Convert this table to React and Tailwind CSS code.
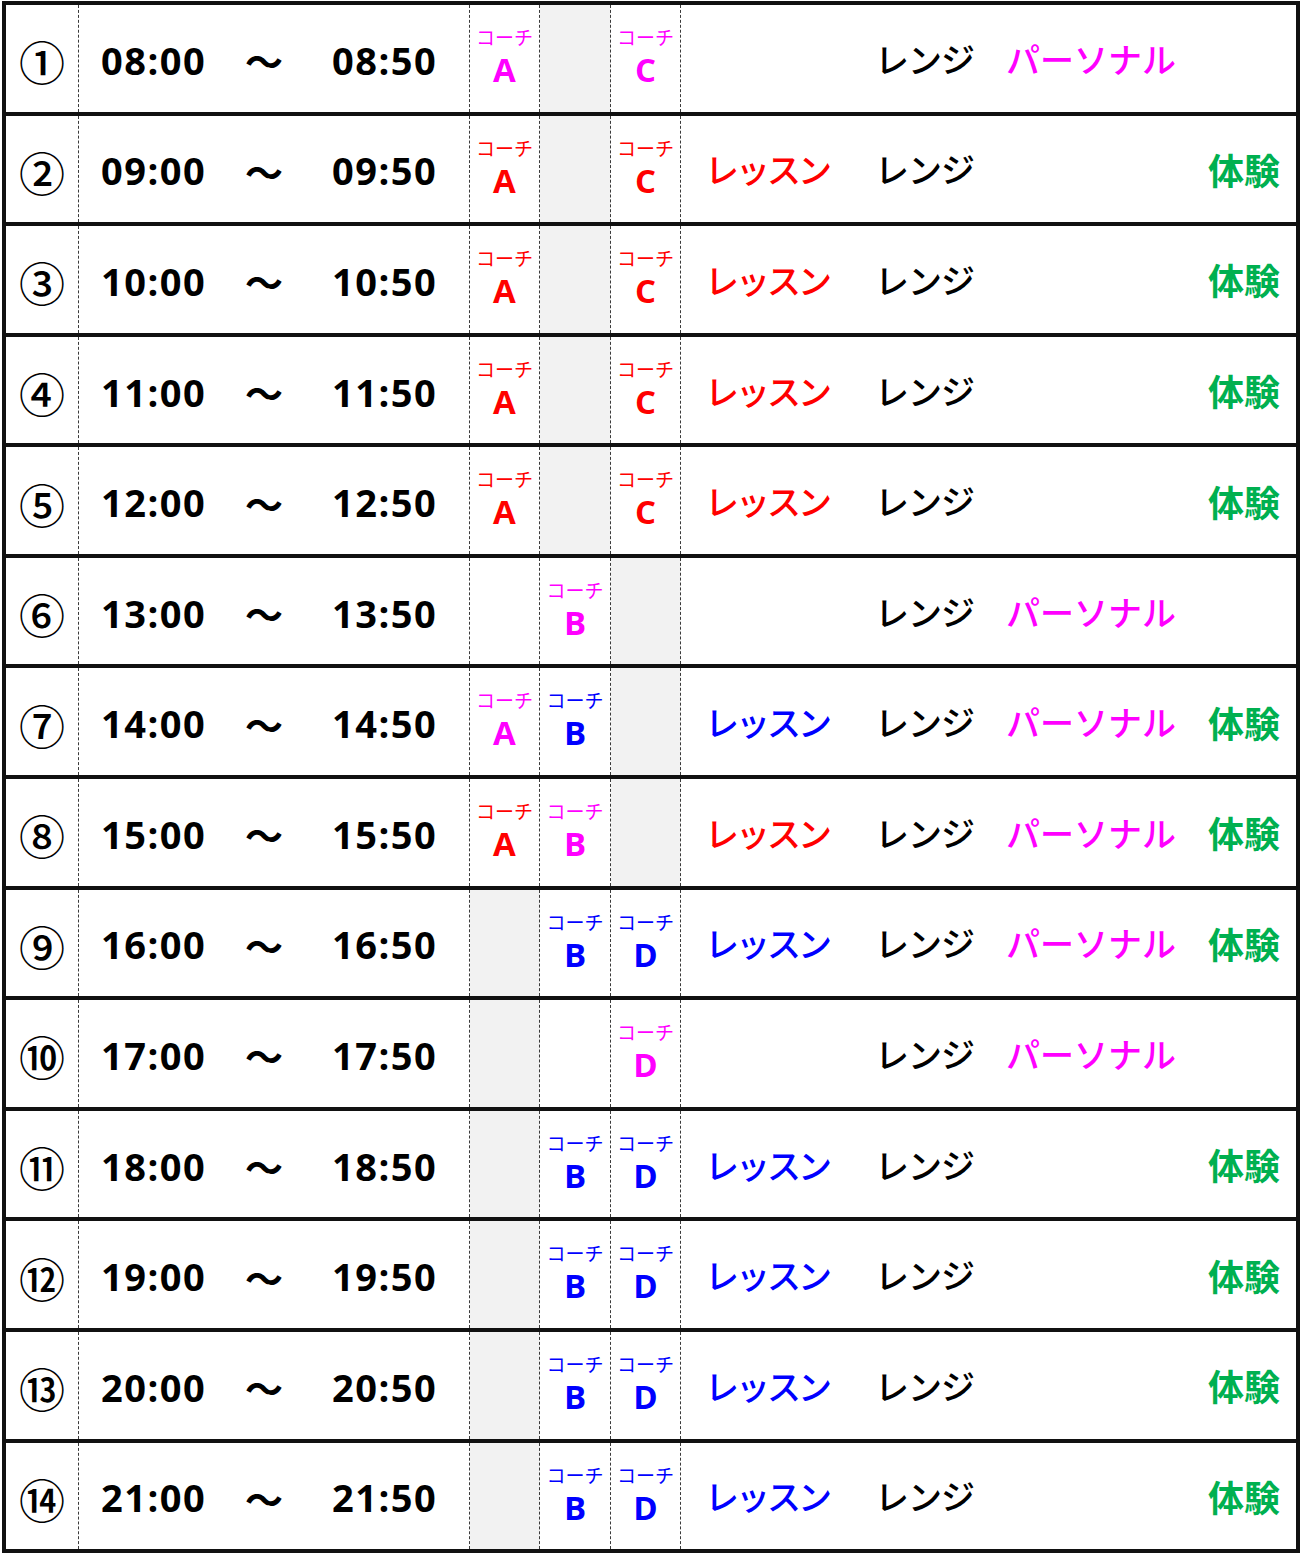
import React from 'react';

// 色: m=マゼンタ r=赤 b=青
const colorOf = {
  m: 'text-[#ff00ff]',
  r: 'text-[#ff0000]',
  b: 'text-[#0000ff]',
};

const A = (c) => ({ l: 'A', c });
const B = (c) => ({ l: 'B', c });
const C = (c) => ({ l: 'C', c });
const D = (c) => ({ l: 'D', c });
const G = 'gray';

const rows = [
  { n: '①', s: '08:00', e: '08:50', coach: [A('m'), G, C('m')], lesson: null, personal: true, trial: false },
  { n: '②', s: '09:00', e: '09:50', coach: [A('r'), G, C('r')], lesson: 'r', personal: false, trial: true },
  { n: '③', s: '10:00', e: '10:50', coach: [A('r'), G, C('r')], lesson: 'r', personal: false, trial: true },
  { n: '④', s: '11:00', e: '11:50', coach: [A('r'), G, C('r')], lesson: 'r', personal: false, trial: true },
  { n: '⑤', s: '12:00', e: '12:50', coach: [A('r'), G, C('r')], lesson: 'r', personal: false, trial: true },
  { n: '⑥', s: '13:00', e: '13:50', coach: [null, B('m'), G], lesson: null, personal: true, trial: false },
  { n: '⑦', s: '14:00', e: '14:50', coach: [A('m'), B('b'), G], lesson: 'b', personal: true, trial: true },
  { n: '⑧', s: '15:00', e: '15:50', coach: [A('r'), B('m'), G], lesson: 'r', personal: true, trial: true },
  { n: '⑨', s: '16:00', e: '16:50', coach: [G, B('b'), D('b')], lesson: 'b', personal: true, trial: true },
  { n: '⑩', s: '17:00', e: '17:50', coach: [G, null, D('m')], lesson: null, personal: true, trial: false },
  { n: '⑪', s: '18:00', e: '18:50', coach: [G, B('b'), D('b')], lesson: 'b', personal: false, trial: true },
  { n: '⑫', s: '19:00', e: '19:50', coach: [G, B('b'), D('b')], lesson: 'b', personal: false, trial: true },
  { n: '⑬', s: '20:00', e: '20:50', coach: [G, B('b'), D('b')], lesson: 'b', personal: false, trial: true },
  { n: '⑭', s: '21:00', e: '21:50', coach: [G, B('b'), D('b')], lesson: 'b', personal: false, trial: true },
];

const jp = "font-['Noto_Sans_CJK_JP',sans-serif]";
const num = "font-['Open_Sans','Noto_Sans_CJK_JP',sans-serif]";
const dashed = 'border-r border-dashed border-[#3a3a3a]';

const CoachCell = ({ v }) => {
  if (v === G) return <div className={`${dashed} bg-[#f2f2f2]`} />;
  if (!v) return <div className={dashed} />;
  return (
    <div className={`${dashed} flex flex-col items-center pt-[21px] ${colorOf[v.c]}`}>
      <span className={`${jp} text-[19px] leading-[21px]`}>コーチ</span>
      <span className={`${num} font-bold text-[33px] leading-[36px] mt-[5px]`}>{v.l}</span>
    </div>
  );
};

export default function App() {
  return (
    <div className="w-[1301px] h-[1554px] bg-white pt-[1px] pl-[2px]">
      <div className="w-[1298px] h-[1552px] border-[4px] border-[#111] flex flex-col">
        {rows.map((r, i) => (
          <div
            key={r.n}
            className={`flex-1 basis-0 grid grid-cols-[73px_391px_70px_71px_70px_1fr] ${i > 0 ? 'border-t-[4px] border-[#111]' : ''}`}
          >
            <div className={`${dashed} flex items-center justify-center pt-[4px]`}>
              <span className={`${jp} font-medium text-[46px] leading-none text-black`}>{r.n}</span>
            </div>
            <div className={`${dashed} flex items-center pl-[22px] pt-[4px] text-black`}>
              <span className={`${num} font-bold text-[38px] w-[144px] tracking-[1.5px]`}>{r.s}</span>
              <span className={`${jp} font-bold text-[38px] w-[87px] leading-none`}>～</span>
              <span className={`${num} font-bold text-[38px] tracking-[1.5px]`}>{r.e}</span>
            </div>
            {r.coach.map((c, j) => (
              <CoachCell key={j} v={c} />
            ))}
            <div className={`${jp} flex items-center pl-[24px] text-[34px] font-medium`}>
              <span className={`w-[170px] tracking-[-3px] ${r.lesson ? colorOf[r.lesson] : ''}`}>{r.lesson ? 'レッスン' : ''}</span>
              <span className="w-[131px] tracking-[-1px] text-black">レンジ</span>
              <span className="w-[202px] text-[#ff00ff]">{r.personal ? 'パーソナル' : ''}</span>
              <span className="font-bold text-[36px] text-[#00b050]">{r.trial ? '体験' : ''}</span>
            </div>
          </div>
        ))}
      </div>
    </div>
  );
}
